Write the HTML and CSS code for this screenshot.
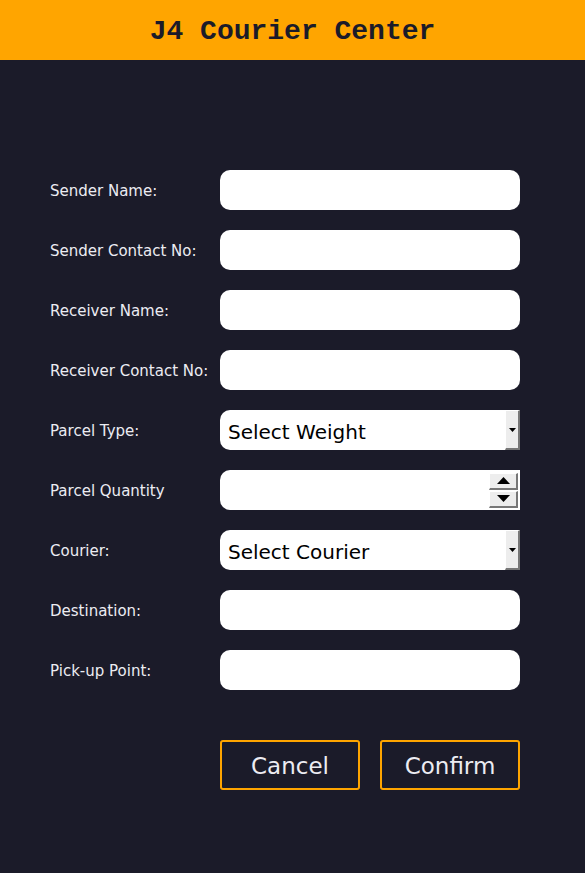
FILE: index.html
```html
<!DOCTYPE html>
<html>
<head>
<meta charset="utf-8">
<title>J4 Courier Center</title>
<link rel="stylesheet" href="styles.css">
</head>
<body>
<header class="topbar"><h1 class="title">J4 Courier Center</h1></header>
<main class="form">
  <div class="row"><label class="label">Sender Name:</label><div class="field"></div></div>
  <div class="row"><label class="label">Sender Contact No:</label><div class="field"></div></div>
  <div class="row"><label class="label">Receiver Name:</label><div class="field"></div></div>
  <div class="row"><label class="label">Receiver Contact No:</label><div class="field"></div></div>
  <div class="row"><label class="label">Parcel Type:</label>
    <div class="field select"><span class="select-text">Select Weight</span><span class="drop-btn"><svg width="7" height="4" viewBox="0 0 7 4"><path d="M0 0H7L3.5 4Z" fill="#000"/></svg></span></div></div>
  <div class="row"><label class="label">Parcel Quantity</label>
    <div class="field spin"><span class="spinner"><span class="spin-btn"><svg width="13" height="7" viewBox="0 0 13 7"><path d="M0 7H13L6.5 0Z" fill="#000"/></svg></span><span class="spin-btn"><svg width="13" height="7" viewBox="0 0 13 7"><path d="M0 0H13L6.5 7Z" fill="#000"/></svg></span></span></div></div>
  <div class="row"><label class="label">Courier:</label>
    <div class="field select"><span class="select-text">Select Courier</span><span class="drop-btn"><svg width="7" height="4" viewBox="0 0 7 4"><path d="M0 0H7L3.5 4Z" fill="#000"/></svg></span></div></div>
  <div class="row"><label class="label">Destination:</label><div class="field"></div></div>
  <div class="row"><label class="label">Pick-up Point:</label><div class="field"></div></div>
  <div class="actions">
    <button class="btn">Cancel</button>
    <button class="btn">Confirm</button>
  </div>
</main>
</body>
</html>
```
FILE: styles.css
```css
html, body {
  margin: 0;
  padding: 0;
  background: #1b1b29;
  height: 100%;
}
body {
  font-family: "DejaVu Sans", Verdana, sans-serif;
}
.topbar {
  background: #ffa500;
  height: 60px;
  display: flex;
  align-items: center;
  justify-content: center;
}
.title {
  margin: 0;
  padding-top: 2px;
  font-family: "Liberation Mono", "Courier New", monospace;
  font-weight: bold;
  font-size: 28px;
  color: #1b1b29;
}
.form {
  display: flex;
  flex-direction: column;
  gap: 20px;
  padding: 110px 0 0 50px;
}
.row {
  display: flex;
  align-items: center;
  height: 40px;
}
.label {
  width: 170px;
  color: #ececf2;
  font-size: 15px;
  padding-top: 1px;
}
.field {
  width: 300px;
  height: 40px;
  background: #fff;
  border-radius: 10px;
  box-sizing: border-box;
  display: flex;
  align-items: center;
  position: relative;
  overflow: hidden;
}
.select {
  border-radius: 10px 0 0 10px;
  overflow: visible;
}
.select-text {
  padding: 3px 0 0 8px;
  font-size: 20px;
  color: #000;
  flex: 1;
}
.drop-btn {
  width: 15px;
  height: 40px;
  box-sizing: border-box;
  background: #ededed;
  border-left: 1px solid #fff;
  border-top: 1px solid #fff;
  border-right: 2px solid #777;
  border-bottom: 2px solid #777;
  display: flex;
  align-items: center;
  justify-content: center;
}
.spin {
  overflow: visible;
  border-radius: 10px 0 0 10px;
  justify-content: flex-end;
}
.spinner {
  display: flex;
  flex-direction: column;
  gap: 1px;
  margin-right: 2px;
}
.spin-btn {
  width: 29px;
  height: 17px;
  box-sizing: border-box;
  background: #ededed;
  border-left: 1px solid #fff;
  border-top: 1px solid #fff;
  border-right: 2px solid #777;
  border-bottom: 2px solid #777;
  display: flex;
  align-items: center;
  justify-content: center;
}
.actions {
  display: flex;
  gap: 20px;
  padding-left: 170px;
  margin-top: 30px;
}
.btn {
  width: 140px;
  height: 50px;
  background: transparent;
  border: 2px solid #ffa500;
  border-radius: 3px;
  color: #ececf2;
  font-family: "DejaVu Sans", Verdana, sans-serif;
  font-size: 23px;
  padding: 2px 0 0;
}
```
